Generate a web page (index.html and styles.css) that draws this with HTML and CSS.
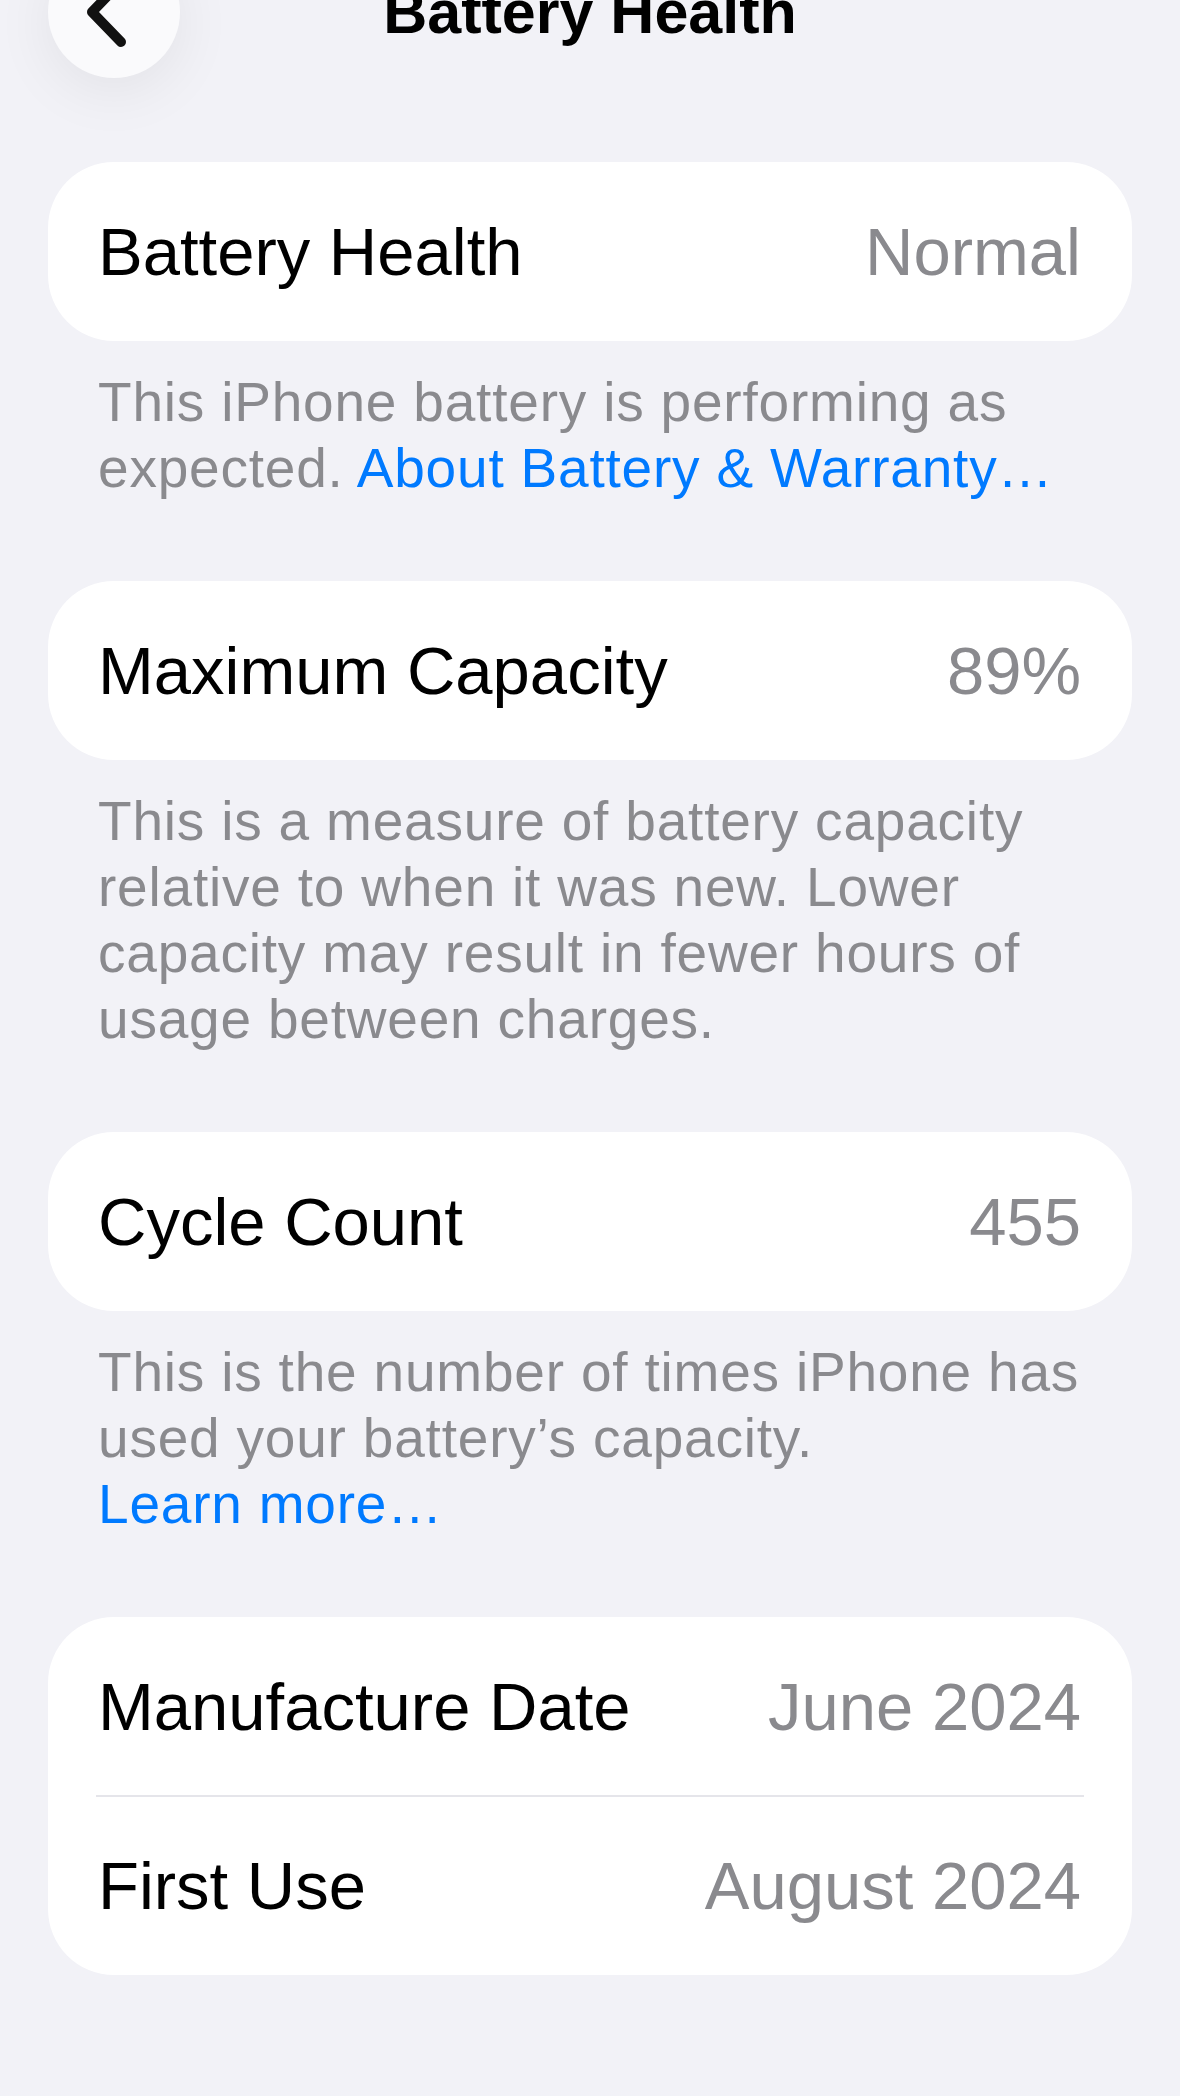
FILE: index.html
```html
<!DOCTYPE html>
<html lang="en">
<head>
  <meta charset="UTF-8" />
  <meta name="viewport" content="width=device-width, initial-scale=1.0"/>
  <title>Battery Health</title>
  <link rel="stylesheet" href="styles.css">
</head>
<body>

  <div class="navbar">
    <button class="back-btn" aria-label="Back">
      <svg width="132" height="132" viewBox="0 0 132 132">
        <path d="M73 36 L44 66 L73 96" fill="none" stroke="#111" stroke-width="10" stroke-linecap="round" stroke-linejoin="round"/>
      </svg>
    </button>
    <h1 class="nav-title">Battery Health</h1>
    <div></div>
  </div>

  <div class="list">
    <div class="card">
      <div class="row"><span class="label">Battery Health</span><span class="value">Normal</span></div>
    </div>
    <p class="footnote">This iPhone battery is performing as expected. <a href="#">About Battery &amp; Warranty…</a></p>

    <div class="card">
      <div class="row"><span class="label">Maximum Capacity</span><span class="value">89%</span></div>
    </div>
    <p class="footnote">This is a measure of battery capacity relative to when it was new. Lower capacity may result in fewer hours of usage between charges.</p>

    <div class="card">
      <div class="row"><span class="label">Cycle Count</span><span class="value">455</span></div>
    </div>
    <p class="footnote">This is the number of times iPhone has used your battery’s capacity.<br><a href="#">Learn more…</a></p>

    <div class="card">
      <div class="row split"><span class="label">Manufacture Date</span><span class="value">June 2024</span></div>
      <div class="row split"><span class="label">First Use</span><span class="value">August 2024</span></div>
    </div>
  </div>

</body>
</html>
```

FILE: styles.css
```css
body {
  margin: 0;
  font-family: "Liberation Sans", Arial, sans-serif;
  background: #f2f2f7;
  color: #000;
  overflow: hidden;
}
.navbar {
  display: grid;
  grid-template-columns: 132px 1fr 132px;
  align-items: center;
  margin: -54px 48px 84px;
  height: 132px;
}
.back-btn {
  width: 132px;
  height: 132px;
  padding: 0;
  border: none;
  border-radius: 50%;
  background: #fafafc;
  box-shadow: 0 12px 60px rgba(0, 0, 0, 0.07);
  cursor: pointer;
}
.back-btn svg {
  display: block;
}
.nav-title {
  margin: 0;
  text-align: center;
  font-size: 61px;
  line-height: 60px;
  font-weight: 700;
}
.list {
  margin: 0 48px;
}
.card {
  background: #fff;
  border-radius: 66px;
  overflow: hidden;
}
.row {
  display: flex;
  justify-content: space-between;
  align-items: center;
  height: 179px;
  padding: 0 51px 0 50px;
  font-size: 67px;
}
.row.split {
  height: 178px;
}
.row.split + .row.split {
  height: 180px;
  position: relative;
}
.row.split + .row.split::before {
  content: "";
  position: absolute;
  top: 0;
  left: 48px;
  right: 48px;
  height: 2px;
  background: #e5e5ea;
}
.value {
  color: #8a8a8e;
}
.footnote {
  margin: 0 0 80px;
  padding: 28px 40px 0 50px;
  font-size: 55px;
  line-height: 66px;
  letter-spacing: 0.8px;
  color: #8a8a8e;
}
.footnote a {
  color: #007aff;
  text-decoration: none;
}
```
